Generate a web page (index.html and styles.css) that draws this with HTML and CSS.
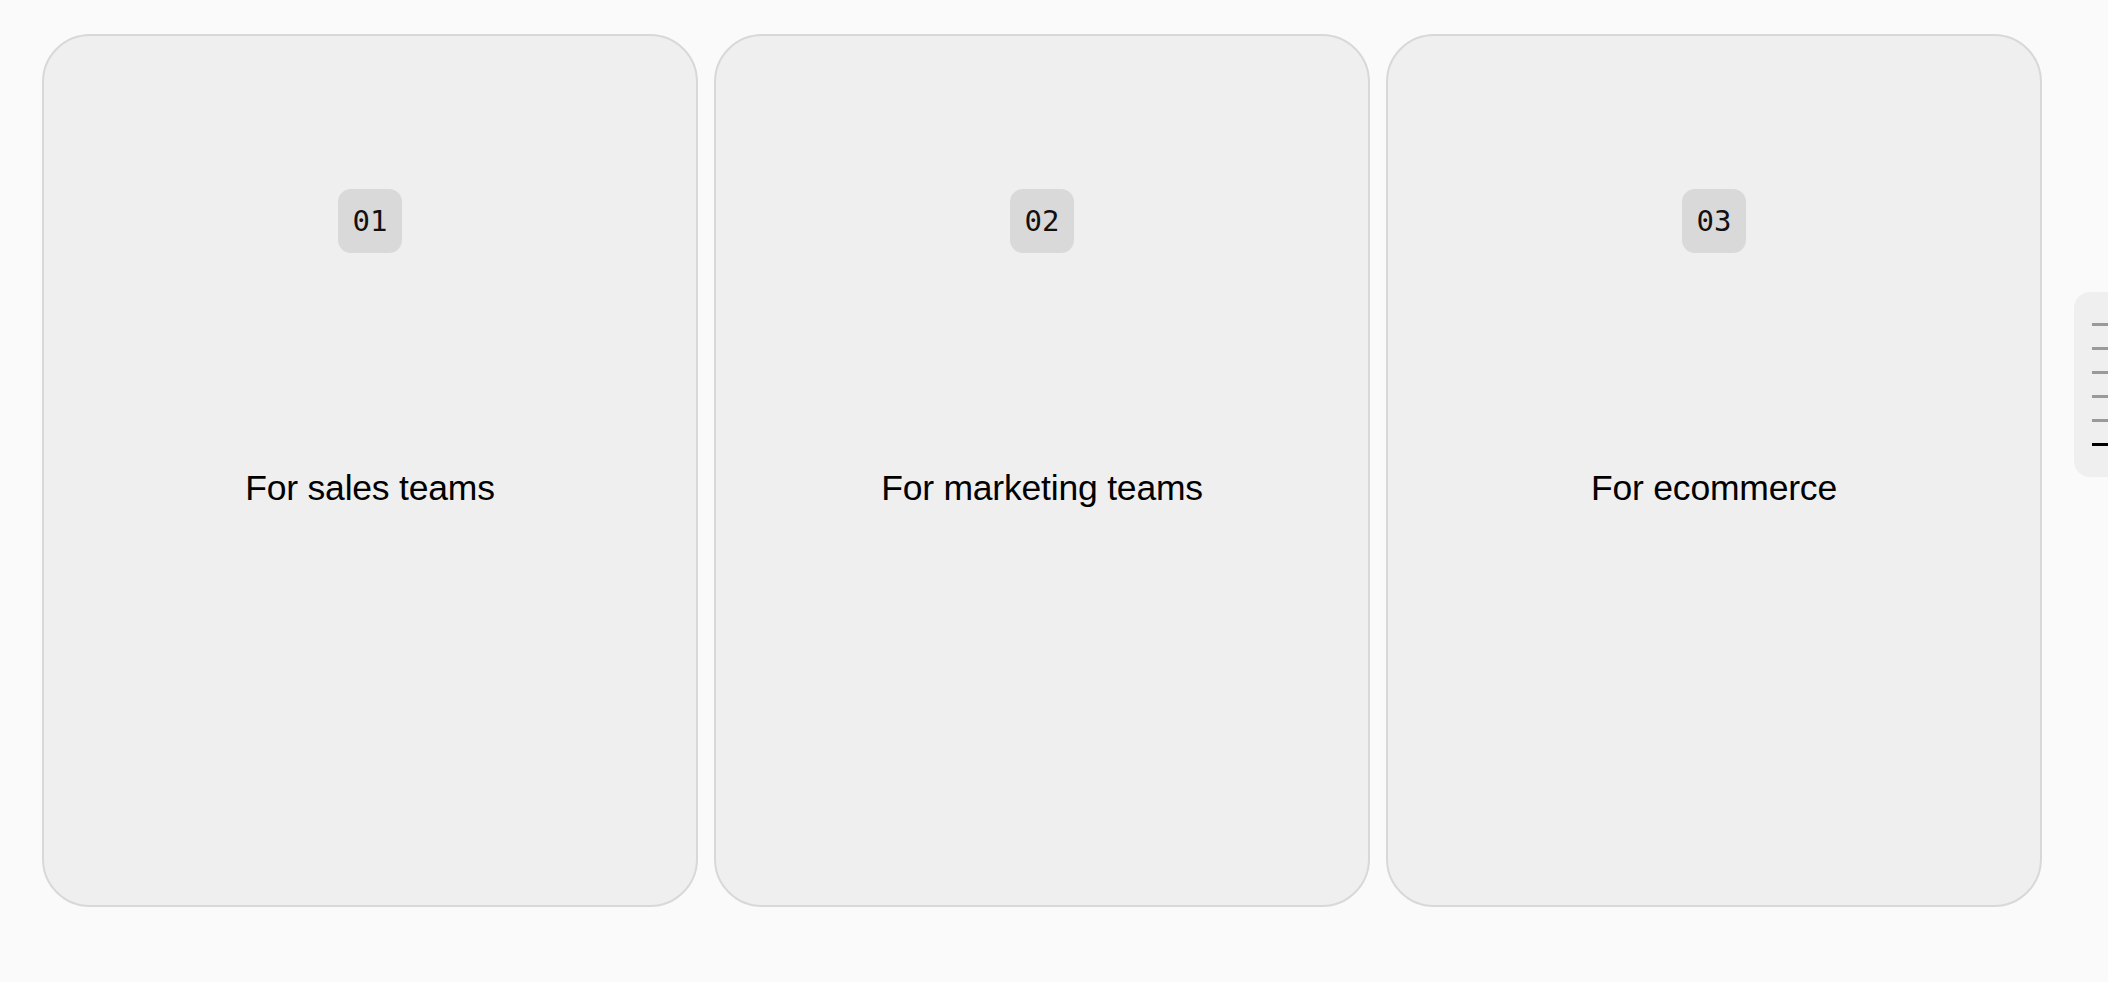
FILE: index.html
```html
<!DOCTYPE html>
<html lang="en">
<head>
<meta charset="utf-8">
<title>Teams</title>
<link rel="stylesheet" href="styles.css">
</head>
<body>
<main class="cards">
  <section class="card">
    <div class="badge">01</div>
    <h2 class="title">For sales teams</h2>
  </section>
  <section class="card">
    <div class="badge">02</div>
    <h2 class="title">For marketing teams</h2>
  </section>
  <section class="card">
    <div class="badge">03</div>
    <h2 class="title">For ecommerce</h2>
  </section>
</main>
<nav class="side-nav" aria-label="Sections">
  <span class="tick"></span>
  <span class="tick"></span>
  <span class="tick"></span>
  <span class="tick"></span>
  <span class="tick"></span>
  <span class="tick active"></span>
</nav>
</body>
</html>
```
FILE: styles.css
```css
* { box-sizing: border-box; }
html, body {
  margin: 0;
  padding: 0;
  background: #fafafa;
  height: 100%;
  overflow: hidden;
}
body {
  font-family: "Liberation Sans", Arial, sans-serif;
  color: #000;
}
.cards {
  display: flex;
  gap: 16px;
  padding: 34px 0 0 42px;
}
.card {
  width: 656px;
  height: 873px;
  flex: none;
  background: #efefef;
  border: 2px solid #d8d8d8;
  border-radius: 48px;
  display: flex;
  flex-direction: column;
  align-items: center;
  padding-top: 153px;
}
.badge {
  width: 64px;
  height: 64px;
  border-radius: 13px;
  background: #d9d9d9;
  display: flex;
  align-items: center;
  justify-content: center;
  font-family: "DejaVu Sans Mono", "Liberation Mono", monospace;
  font-size: 29px;
  color: #111;
}
.title {
  margin: 211px 0 0;
  font-weight: 400;
  font-size: 35.5px;
  line-height: 48px;
  letter-spacing: -0.2px;
}
.side-nav {
  position: fixed;
  top: 292px;
  left: 2074px;
  width: 60px;
  height: 185px;
  background: #efefef;
  border-radius: 16px;
  padding: 31px 0 0 18px;
  display: flex;
  flex-direction: column;
  gap: 21px;
}
.tick {
  display: block;
  width: 40px;
  height: 3px;
  background: #9a9a9a;
}
.tick.active { background: #000; }
```
